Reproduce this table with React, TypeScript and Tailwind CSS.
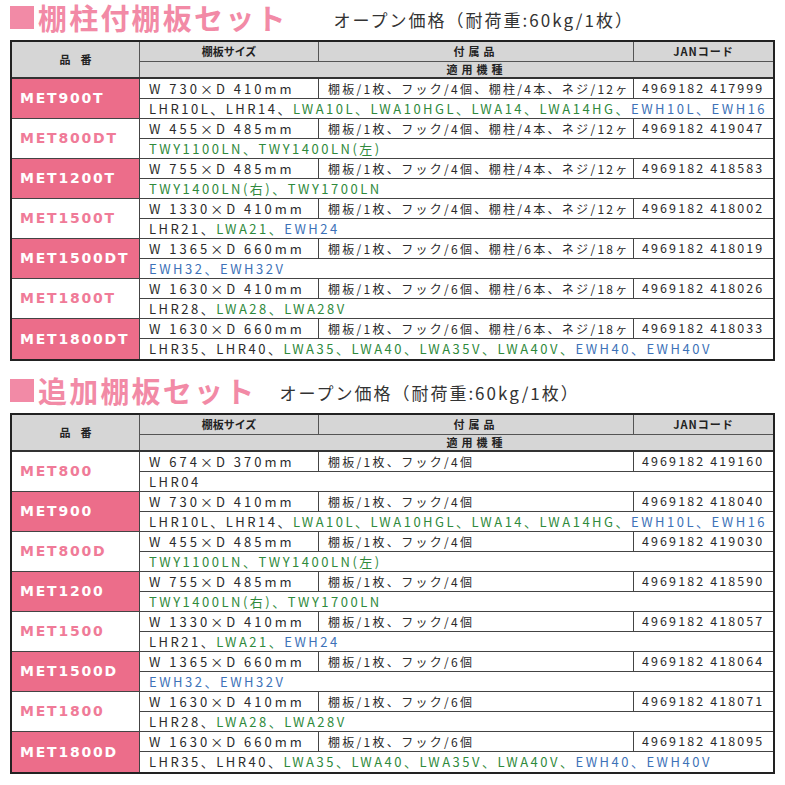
import React from 'react';

type Tok = { t: string; c: 'k' | 'g' | 'b' };

interface Row {
    code: string;
    pink: boolean;
    size: string;
    parts: string;
    jan: string;
    models: Tok[];
}

const jp = { fontFamily: '"Noto Sans CJK JP", "Noto Sans", sans-serif' };
const label = { fontFamily: '"DejaVu Sans", "Noto Sans CJK JP", sans-serif' };

const P12 = '棚板/1枚、フック/4個、棚柱/4本、ネジ/12ヶ';
const P18 = '棚板/1枚、フック/6個、棚柱/6本、ネジ/18ヶ';
const P4 = '棚板/1枚、フック/4個';
const P6 = '棚板/1枚、フック/6個';

const k = (t: string): Tok => ({ t, c: 'k' });
const g = (t: string): Tok => ({ t, c: 'g' });
const b = (t: string): Tok => ({ t, c: 'b' });

const M900 = [k('LHR10L'), k('LHR14'), g('LWA10L'), g('LWA10HGL'), g('LWA14'), g('LWA14HG'), b('EWH10L'), b('EWH16')];
const M800D = [g('TWY1100LN'), g('TWY1400LN(左)')];
const M1200 = [g('TWY1400LN(右)'), g('TWY1700LN')];
const M1500 = [k('LHR21'), g('LWA21'), b('EWH24')];
const M1500D = [b('EWH32'), b('EWH32V')];
const M1800 = [k('LHR28'), g('LWA28'), g('LWA28V')];
const M1800D = [k('LHR35'), k('LHR40'), g('LWA35'), g('LWA40'), g('LWA35V'), g('LWA40V'), b('EWH40'), b('EWH40V')];

const setRows: Row[] = [
    { code: 'MET900T', pink: true, size: 'W 730×D 410mm', parts: P12, jan: '4969182 417999', models: M900 },
    { code: 'MET800DT', pink: false, size: 'W 455×D 485mm', parts: P12, jan: '4969182 419047', models: M800D },
    { code: 'MET1200T', pink: true, size: 'W 755×D 485mm', parts: P12, jan: '4969182 418583', models: M1200 },
    { code: 'MET1500T', pink: false, size: 'W 1330×D 410mm', parts: P12, jan: '4969182 418002', models: M1500 },
    { code: 'MET1500DT', pink: true, size: 'W 1365×D 660mm', parts: P18, jan: '4969182 418019', models: M1500D },
    { code: 'MET1800T', pink: false, size: 'W 1630×D 410mm', parts: P18, jan: '4969182 418026', models: M1800 },
    { code: 'MET1800DT', pink: true, size: 'W 1630×D 660mm', parts: P18, jan: '4969182 418033', models: M1800D },
];

const addRows: Row[] = [
    { code: 'MET800', pink: false, size: 'W 674×D 370mm', parts: P4, jan: '4969182 419160', models: [k('LHR04')] },
    { code: 'MET900', pink: true, size: 'W 730×D 410mm', parts: P4, jan: '4969182 418040', models: M900 },
    { code: 'MET800D', pink: false, size: 'W 455×D 485mm', parts: P4, jan: '4969182 419030', models: M800D },
    { code: 'MET1200', pink: true, size: 'W 755×D 485mm', parts: P4, jan: '4969182 418590', models: M1200 },
    { code: 'MET1500', pink: false, size: 'W 1330×D 410mm', parts: P4, jan: '4969182 418057', models: M1500 },
    { code: 'MET1500D', pink: true, size: 'W 1365×D 660mm', parts: P6, jan: '4969182 418064', models: M1500D },
    { code: 'MET1800', pink: false, size: 'W 1630×D 410mm', parts: P6, jan: '4969182 418071', models: M1800 },
    { code: 'MET1800D', pink: true, size: 'W 1630×D 660mm', parts: P6, jan: '4969182 418095', models: M1800D },
];

const tokColor = { k: 'text-[#2b2b2b]', g: 'text-[#2f8a3c]', b: 'text-[#3d72b8]' };

function Title({ text, gap }: { text: string; gap: string }) {
    return (
        <div className="flex items-center h-[40px] pb-[6px]">
            <div className="w-[24px] h-[23px] bg-[#f28aa6] shrink-0" />
            <div className="text-[29px] leading-[34px] font-bold text-[#f28aa6] tracking-[2.2px] ml-[4px] whitespace-nowrap" style={jp}>{text}</div>
            <div className={`text-[17px] leading-[24px] text-[#333] ${gap} mt-[5px] tracking-[2px] whitespace-nowrap`} style={jp}>
                オープン価格（耐荷重:60kg/1枚）
            </div>
        </div>
    );
}

function Header() {
    return (
        <div className="flex border-b-2 border-[#333] bg-[#d6d6d6] text-[#222] text-[11px] font-bold" style={jp}>
            <div className="w-[128px] border-r border-[#555] flex items-center justify-center tracking-[10px] pl-[10px]">品番</div>
            <div className="flex-1 flex flex-col">
                <div className="flex h-[20px] border-b border-[#555]">
                    <div className="w-[179px] border-r border-[#555] flex items-center justify-center">棚板サイズ</div>
                    <div className="w-[315px] border-r border-[#555] flex items-center justify-center tracking-[4px]">付属品</div>
                    <div className="flex-1 flex items-center justify-center tracking-[1px]">JANコード</div>
                </div>
                <div className="h-[15px] flex items-center justify-center tracking-[4px] pl-[40px]">適用機種</div>
            </div>
        </div>
    );
}

function DataRow({ row, last }: { row: Row; last: boolean }) {
    return (
        <div className={`flex h-[40px] ${last ? '' : 'border-b border-[#444]'}`}>
            <div
                className={`w-[128px] border-r border-[#444] flex items-center pl-[8px] text-[14px] font-bold tracking-[1.8px] ${row.pink ? 'bg-[#ec6d8a] text-white' : 'bg-white text-[#f07b98]'}`}
                style={label}
            >
                {row.code}
            </div>
            <div className="flex-1 flex flex-col text-[#2b2b2b]" style={jp}>
                <div className="flex h-[20px] border-b border-[#444]">
                    <div className="w-[179px] border-r border-[#444] flex items-center pl-[9px] text-[13px] tracking-[3px] whitespace-nowrap">{row.size}</div>
                    <div className="w-[315px] border-r border-[#444] flex items-center pl-[9px] text-[12px] tracking-[2.3px] whitespace-nowrap">{row.parts}</div>
                    <div className="flex-1 flex items-center pl-[8px] text-[12.5px] tracking-[2.1px] whitespace-nowrap">{row.jan}</div>
                </div>
                <div className="flex-1 flex items-center pl-[9px] text-[13px] tracking-[2.5px] whitespace-nowrap">
                    {row.models.map((m, i) => (
                        <span key={i} className={tokColor[m.c]}>
                            {m.t}
                            {i < row.models.length - 1 ? '、' : ''}
                        </span>
                    ))}
                </div>
            </div>
        </div>
    );
}

function Table({ rows }: { rows: Row[] }) {
    return (
        <div className="border-2 border-[#222] bg-white">
            <Header />
            {rows.map((r, i) => (
                <DataRow key={r.code} row={r} last={i === rows.length - 1} />
            ))}
        </div>
    );
}

export default function App() {
    return (
        <div className="w-[785px] min-h-[785px] bg-white px-[10px]">
            <Title text="棚柱付棚板セット" gap="ml-[46px]" />
            <Table rows={setRows} />
            <div className="h-[12px]" />
            <Title text="追加棚板セット" gap="ml-[23px]" />
            <Table rows={addRows} />
        </div>
    );
}
